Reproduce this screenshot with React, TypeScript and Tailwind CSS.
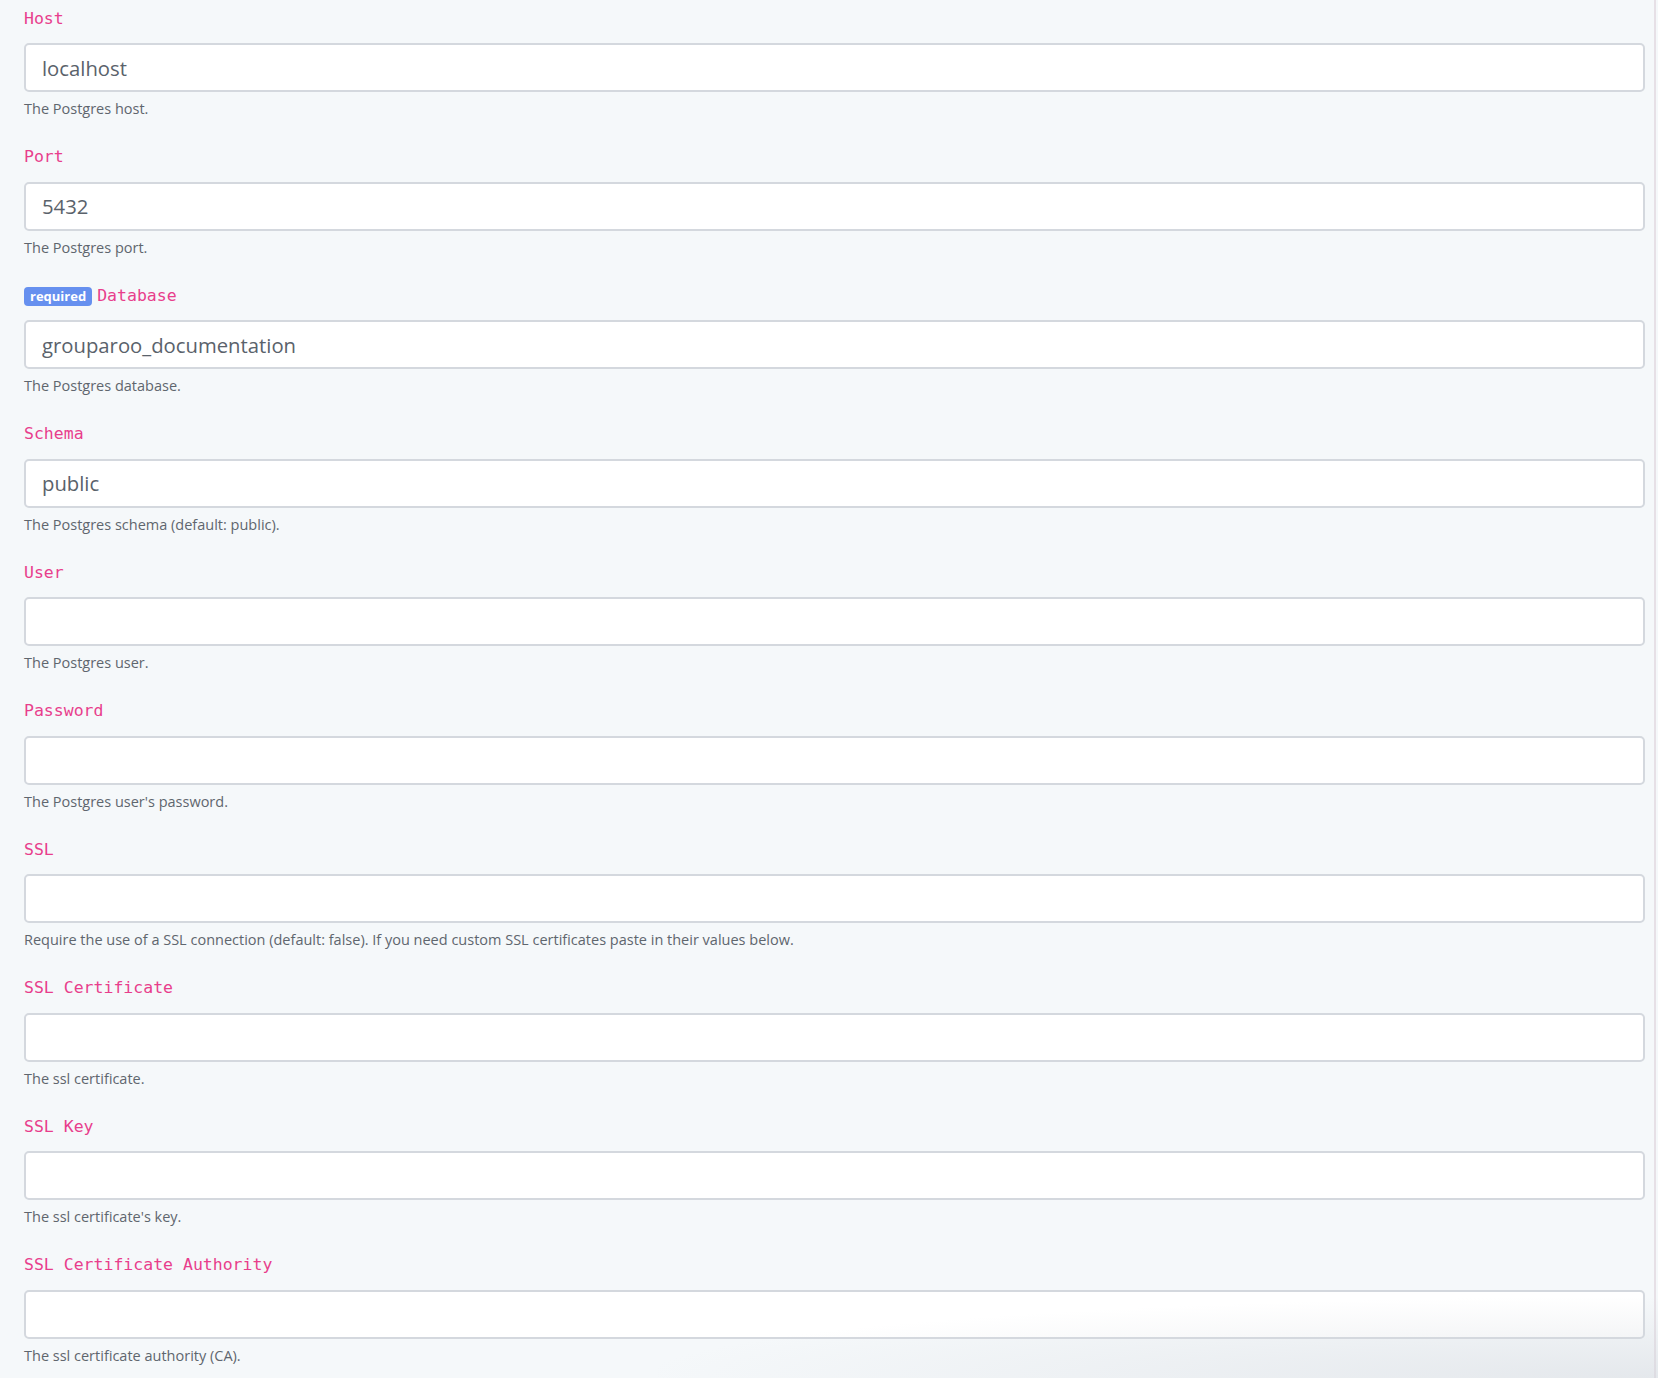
const fields = [
  { label: "Host", value: "localhost", help: "The Postgres host." },
  { label: "Port", value: "5432", help: "The Postgres port." },
  { label: "Database", value: "grouparoo_documentation", help: "The Postgres database.", required: true },
  { label: "Schema", value: "public", help: "The Postgres schema (default: public)." },
  { label: "User", value: "", help: "The Postgres user." },
  { label: "Password", value: "", help: "The Postgres user's password." },
  {
    label: "SSL",
    value: "",
    help: "Require the use of a SSL connection (default: false). If you need custom SSL certificates paste in their values below.",
  },
  { label: "SSL Certificate", value: "", help: "The ssl certificate." },
  { label: "SSL Key", value: "", help: "The ssl certificate's key." },
  { label: "SSL Certificate Authority", value: "", help: "The ssl certificate authority (CA)." },
];

function Field({ label, value, help, required }: { label: string; value: string; help: string; required?: boolean }) {
  return (
    <div className="mb-[25.5px]">
      <div className="flex items-center gap-[5px] h-6 pt-[2px]">
        {required ? (
          <span className="bg-[#6690ef] text-white text-[13px] font-bold leading-[19px] h-[19px] px-[6px] rounded-[4px] font-['Open_Sans',sans-serif]">
            required
          </span>
        ) : null}
        <span className="text-[#e83e8c] text-[16.5px] font-['DejaVu_Sans_Mono',monospace]">{label}</span>
      </div>
      <input
        className="mt-[13px] h-[49px] w-full bg-white border-2 border-[#d4d8de] rounded-[5px] px-4 text-[20.3px] text-[#5a626b] font-['Open_Sans',sans-serif] outline-none"
        defaultValue={value}
        type="text"
      />
      <p className="mt-[7px] leading-5 text-[14.5px] text-[#5f666e] font-['Open_Sans',sans-serif]">{help}</p>
    </div>
  );
}

export default function App() {
  return (
    <div className="relative min-h-[1378px] w-[1658px] bg-[#f5f8fa] overflow-hidden">
      <div className="w-[1656px] border-r-2 border-[#e6e0e6] min-h-[1378px] pl-6 pr-[9px] pt-[6px]">
        {fields.map((f) => (
          <Field key={f.label} {...f} />
        ))}
      </div>
      <div className="pointer-events-none absolute bottom-0 right-0 w-[1000px] h-[80px] bg-[radial-gradient(ellipse_at_bottom_right,rgba(212,216,222,0.5),rgba(245,248,250,0)_72%)]" />
    </div>
  );
}
